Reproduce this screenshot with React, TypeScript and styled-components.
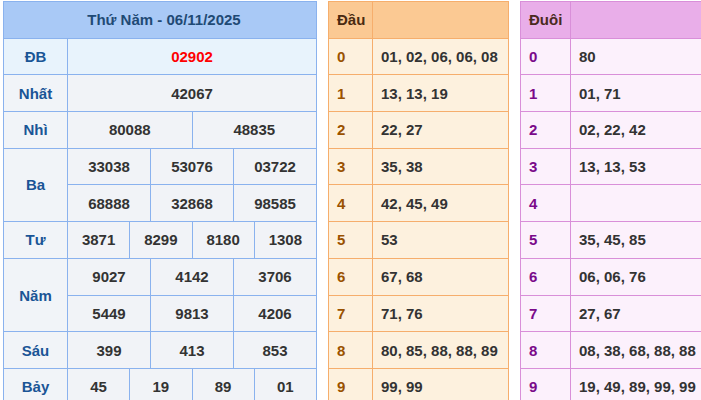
import React from "react";
import styled, { createGlobalStyle } from "styled-components";

const Global = createGlobalStyle`
  body { margin: 0; font-family: "Liberation Sans", Arial, sans-serif; background: #fff; }
`;

const Page = styled.div`
  display: flex;
  gap: 11px;
  padding: 1px 0 0 3px;
  width: 701px;
  height: 400px;
  overflow: hidden;
  box-sizing: border-box;
`;

const Table = styled.table<{ $w: number; $border: string }>`
  border-collapse: collapse;
  table-layout: fixed;
  width: ${(p) => p.$w}px;
  flex: none;
  font-size: 15px;
  font-weight: bold;
  color: #333;
  td, th {
    border: 1px solid ${(p) => p.$border};
    height: 35.7px;
    padding: 0;
  }
`;

const Head = styled.th<{ $bg: string; $color: string; $align?: string }>`
  background: ${(p) => p.$bg};
  color: ${(p) => p.$color};
  text-align: ${(p) => p.$align || "center"};
  padding-left: 8px !important;
  font-size: 15px;
`;

const Label = styled.td<{ $bg?: string }>`
  background: ${(p) => p.$bg || "#f1f4f8"};
  color: #1a5596;
  text-align: center;
`;

const Num = styled.td<{ $bg?: string; $red?: boolean }>`
  background: ${(p) => p.$bg || "#f1f3f7"};
  color: ${(p) => (p.$red ? "#f00" : "#333")};
  text-align: center;
`;

const Digit = styled.td<{ $bg: string; $color: string }>`
  background: ${(p) => p.$bg};
  color: ${(p) => p.$color};
  padding-left: 8px !important;
`;

const Vals = styled.td<{ $bg: string }>`
  background: ${(p) => p.$bg};
  padding-left: 8px !important;
  white-space: nowrap;
  overflow: hidden;
`;

const prizes: [string, string[][]][] = [
  ["Nhì", [["80088", "48835"]]],
  ["Ba", [["33038", "53076", "03722"], ["68888", "32868", "98585"]]],
  ["Tư", [["3871", "8299", "8180", "1308"]]],
  ["Năm", [["9027", "4142", "3706"], ["5449", "9813", "4206"]]],
  ["Sáu", [["399", "413", "853"]]],
  ["Bảy", [["45", "19", "89", "01"]]],
];

const dau = ["01, 02, 06, 06, 08", "13, 13, 19", "22, 27", "35, 38", "42, 45, 49", "53", "67, 68", "71, 76", "80, 85, 88, 88, 89", "99, 99"];
const duoi = ["80", "01, 71", "02, 22, 42", "13, 13, 53", "", "35, 45, 85", "06, 06, 76", "27, 67", "08, 38, 68, 88, 88", "19, 49, 89, 99, 99"];

function Side({ title, rows, w, first, border, headBg, bg, digit, headColor }: {
  title: string; rows: string[]; w: number; first: number; border: string; headBg: string; bg: string; digit: string; headColor: string;
}) {
  return (
    <Table $w={w} $border={border}>
      <colgroup><col style={{ width: first }} /><col /></colgroup>
      <tbody>
        <tr>
          <Head $bg={headBg} $color={headColor} $align="left">{title}</Head>
          <Head $bg={headBg} $color={headColor} />
        </tr>
        {rows.map((r, i) => (
          <tr key={i}>
            <Digit $bg={bg} $color={digit}>{i}</Digit>
            <Vals $bg={bg}>{r}</Vals>
          </tr>
        ))}
      </tbody>
    </Table>
  );
}

export default function App() {
  return (
    <>
      <Global />
      <Page>
        <Table $w={314} $border="#8ab2ee">
          <colgroup>
            <col style={{ width: 64 }} />
            {Array.from({ length: 12 }).map((_, i) => <col key={i} />)}
          </colgroup>
          <tbody>
            <tr>
              <Head colSpan={13} $bg="#a9c9f6" $color="#1f4a75">Thứ Năm - 06/11/2025</Head>
            </tr>
            <tr>
              <Label $bg="#e8f3fc">ĐB</Label>
              <Num colSpan={12} $bg="#e8f3fc" $red>02902</Num>
            </tr>
            <tr>
              <Label>Nhất</Label>
              <Num colSpan={12}>42067</Num>
            </tr>
            {prizes.map(([name, lines]) =>
              lines.map((line, li) => (
                <tr key={name + li}>
                  {li === 0 && <Label rowSpan={lines.length}>{name}</Label>}
                  {line.map((n) => <Num key={n} colSpan={12 / line.length}>{n}</Num>)}
                </tr>
              ))
            )}
          </tbody>
        </Table>
        <Side title="Đầu" rows={dau} w={181} first={44} border="#f6ae6c" headBg="#fbc993" bg="#fdf1de" digit="#9a5200" headColor="#4a2a10" />
        <Side title="Đuôi" rows={duoi} w={195} first={50} border="#d98fd9" headBg="#e9aee9" bg="#fcf1fc" digit="#7a0a8a" headColor="#4a2a20" />
      </Page>
    </>
  );
}
